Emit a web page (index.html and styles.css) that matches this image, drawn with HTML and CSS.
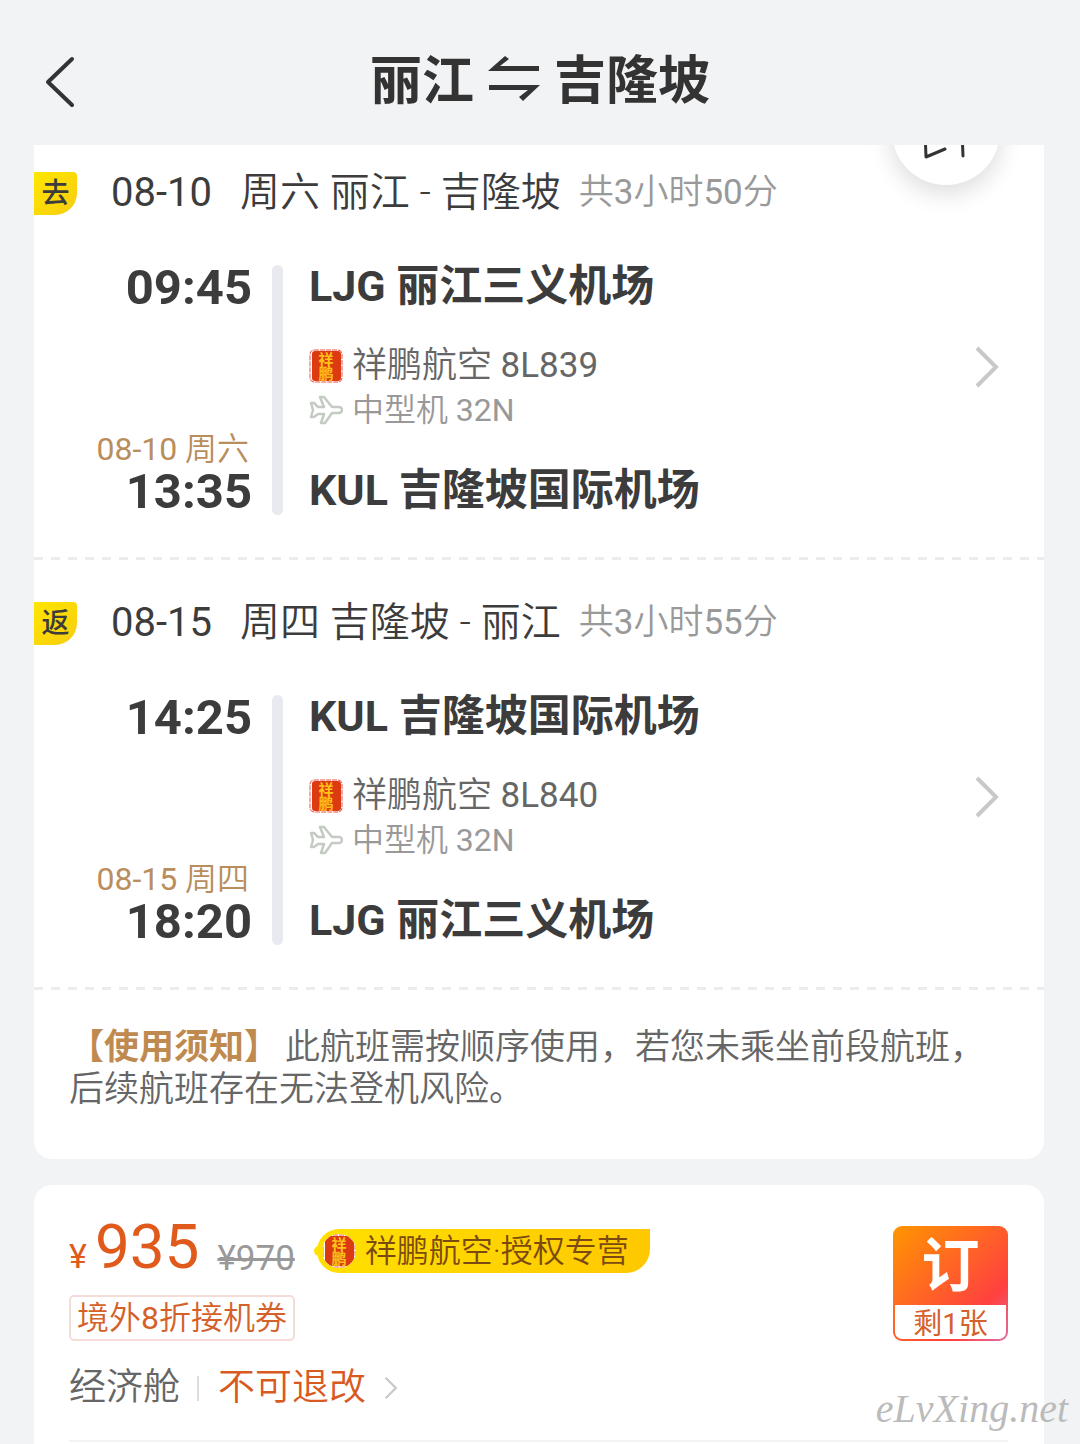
FILE: index.html
```html
<!DOCTYPE html>
<html lang="zh-CN">
<head>
  <meta charset="UTF-8">
  <meta name="viewport" content="width=device-width, initial-scale=1.0">
  <title>丽江 - 吉隆坡</title>
  <link rel="stylesheet" href="styles.css">
</head>
<body>
  <svg class="defs" aria-hidden="true">
    <symbol id="seal" viewBox="0 0 34 34">
      <rect x="1" y="1" width="32" height="32" rx="4" fill="#fff" stroke="#e8524a" stroke-width="1" stroke-dasharray="5 1"/>
      <rect x="3" y="2" width="29" height="30" rx="3" fill="#dc3a10"/>
      <text x="17" y="16" class="seal-text">祥</text>
      <text x="17" y="30" class="seal-text">鹏</text>
    </symbol>
    <symbol id="plane" viewBox="0 0 34 30">
      <path d="M2 8h3l4 4h6L11 2h4l8 10h7a3 3 0 0 1 0 6h-7l-7 10h-4l3-9H9l-4 3H2l2-7z" fill="none" stroke="#c3cbc3" stroke-width="2.5" stroke-linejoin="round"/>
    </symbol>
    <symbol id="chevron" viewBox="0 0 26 44">
      <path d="M3 3l19 19L3 41" fill="none" stroke="currentColor" stroke-width="4"/>
    </symbol>
  </svg>

  <header class="topbar">
    <button class="back" aria-label="返回">
      <svg width="32" height="52" viewBox="0 0 32 52"><path d="M28 3L4 26l24 23" fill="none" stroke="#333" stroke-width="4" stroke-linecap="round" stroke-linejoin="round"/></svg>
    </button>
    <h1>
      <span>丽江</span>
      <svg width="54" height="56" viewBox="0 0 54 56"><path d="M1 17L18 2l4 3-9 7h39v5zM2 31h51L36 47l-4-4 9-7H2z" fill="#333"/></svg>
      <span>吉隆坡</span>
    </h1>
  </header>

  <main>
    <section class="card trip">
      <button class="float-btn" aria-label="分享">
        <svg width="60" height="60" viewBox="0 0 60 60"><path d="M9 30l1 26 19-8M46 30l1 25" fill="none" stroke="#333" stroke-width="3" stroke-linecap="round" stroke-linejoin="round"/></svg>
      </button>

      <article class="segment">
        <h2><span class="tag">去</span><span class="date">08-10</span><span>周六 丽江 - 吉隆坡</span><small>共<span class="num">3</span>小时<span class="num">50</span>分</small></h2>
        <a href="#" class="timeline">
          <div class="times">
            <time>09:45</time>
            <div><span class="arrive-date"><span class="num">08-10</span> 周六</span><time>13:35</time></div>
          </div>
          <span class="bar"></span>
          <div class="info">
            <strong>LJG 丽江三义机场</strong>
            <div>
              <p class="airline"><svg width="34" height="34"><use href="#seal"/></svg><span>祥鹏航空 <span class="num">8L839</span></span></p>
              <p class="model"><svg width="34" height="30"><use href="#plane"/></svg><span>中型机 <span class="num">32N</span></span></p>
            </div>
            <strong>KUL 吉隆坡国际机场</strong>
          </div>
          <svg class="arrow" width="26" height="44"><use href="#chevron"/></svg>
        </a>
      </article>

      <article class="segment">
        <h2><span class="tag">返</span><span class="date">08-15</span><span>周四 吉隆坡 - 丽江</span><small>共<span class="num">3</span>小时<span class="num">55</span>分</small></h2>
        <a href="#" class="timeline">
          <div class="times">
            <time>14:25</time>
            <div><span class="arrive-date"><span class="num">08-15</span> 周四</span><time>18:20</time></div>
          </div>
          <span class="bar"></span>
          <div class="info">
            <strong>KUL 吉隆坡国际机场</strong>
            <div>
              <p class="airline"><svg width="34" height="34"><use href="#seal"/></svg><span>祥鹏航空 <span class="num">8L840</span></span></p>
              <p class="model"><svg width="34" height="30"><use href="#plane"/></svg><span>中型机 <span class="num">32N</span></span></p>
            </div>
            <strong>LJG 丽江三义机场</strong>
          </div>
          <svg class="arrow" width="26" height="44"><use href="#chevron"/></svg>
        </a>
      </article>

      <p class="notice"><b>【使用须知】</b>此航班需按顺序使用，若您未乘坐前段航班，后续航班存在无法登机风险。</p>
    </section>

    <section class="card fare">
      <div class="fare-item">
        <div class="fare-main">
          <div class="price-row">
            <span class="price"><i>¥</i>935</span>
            <del>¥970</del>
            <span class="shop"><svg width="34" height="34"><use href="#seal"/></svg>祥鹏航空·授权专营</span>
          </div>
          <span class="coupon">境外<span class="num">8</span>折接机券</span>
          <div class="rules">
            <span class="cabin">经济舱</span>
            <a href="#">不可退改<svg width="14" height="24"><use href="#chevron"/></svg></a>
          </div>
        </div>
        <button class="book"><b>订</b><span>剩1张</span></button>
      </div>
    </section>
  </main>

  <div class="watermark">eLvXing.net</div>
</body>
</html>
```
FILE: styles.css
```css
* {
  box-sizing: border-box;
}

body {
  margin: 0;
  min-height: 100vh;
  display: flex;
  flex-direction: column;
  position: relative;
  background: #f1f3f5;
  color: #3c3c3c;
  font-family: Roboto, "Noto Sans CJK SC", sans-serif;
  font-weight: 350;
}

h1, h2, p {
  margin: 0;
}

a {
  color: inherit;
  text-decoration: none;
}

button {
  border: none;
  padding: 0;
  font-family: inherit;
  cursor: pointer;
}

svg {
  display: block;
  flex-shrink: 0;
}

.defs {
  display: none;
}

/* digits and codes sit one step heavier than the Chinese text */
.num {
  font-weight: 400;
}

.seal-text {
  font-size: 15px;
  font-weight: 700;
  fill: #ffc21a;
  text-anchor: middle;
}

/* top bar */
.topbar {
  display: grid;
  grid-template-columns: 1fr auto 1fr;
  align-items: center;
  height: 145px;
  padding: 18px 44px 0;
}

.back {
  justify-self: start;
  background: none;
}

.topbar h1 {
  display: flex;
  align-items: center;
  gap: 13px;
  font-size: 52px;
  line-height: 62px;
  color: #333;
}

main {
  flex: 1;
  display: flex;
  flex-direction: column;
  gap: 26px;
  padding: 0 36px 0 34px;
}

.card {
  background: #fff;
  border-radius: 18px;
}

/* trip card */
.trip {
  position: relative;
  overflow: hidden;
  border-top-left-radius: 0;
  border-top-right-radius: 0;
}

.float-btn {
  position: absolute;
  top: -68px;
  right: 44px;
  width: 108px;
  height: 108px;
  display: flex;
  align-items: center;
  justify-content: center;
  border-radius: 50%;
  background: #fff;
  box-shadow: 0 8px 24px rgba(0, 0, 0, 0.14);
}

.segment {
  padding: 35px 0 45px;
  background: repeating-linear-gradient(90deg, #ececec 0 9px, transparent 9px 17px) left bottom / 100% 3px no-repeat;
}

.segment:first-of-type {
  padding-top: 20px;
}

.segment h2 {
  display: flex;
  align-items: center;
  height: 56px;
  margin-bottom: 44px;
  font-size: 40px;
  font-weight: 350;
  line-height: 58px;
}

.tag {
  width: 43px;
  height: 43px;
  margin-right: 34px;
  border-radius: 0 4px 22px 0;
  background: linear-gradient(135deg, #ffe600, #f8cc10);
  font-size: 28px;
  font-weight: 500;
  line-height: 43px;
  text-align: center;
}

.date {
  margin-right: 28px;
  font-weight: 400;
}

.segment small {
  margin-left: 18px;
  font-size: 35px;
  color: #999;
}

.timeline {
  display: flex;
  height: 250px;
}

.times {
  width: 218px;
  display: flex;
  flex-direction: column;
  justify-content: space-between;
  text-align: right;
}

.times time {
  display: block;
  font-size: 49px;
  font-weight: 700;
  line-height: 46px;
}

.arrive-date {
  display: block;
  padding-right: 3px;
  font-size: 32px;
  line-height: 40px;
  color: #b98d5c;
}

.bar {
  width: 11px;
  margin: 0 26px 0 20px;
  border-radius: 6px;
  background: #e9eaef;
}

.info {
  flex: 1;
  display: flex;
  flex-direction: column;
  justify-content: space-between;
  padding-bottom: 4px;
}

.info strong {
  font-size: 43px;
  font-weight: 700;
  line-height: 42px;
}

.airline, .model {
  display: flex;
  align-items: center;
  gap: 9px;
  line-height: 44px;
}

.airline {
  font-size: 35px;
  color: #666;
}

.model {
  font-size: 32px;
  color: #999;
}

.arrow {
  margin: 80px 44px 0 0;
  color: #c8c8c8;
}

.notice {
  padding: 37px 35px 48px;
  font-size: 35px;
  line-height: 42px;
  color: #666;
}

.notice b {
  margin-right: 6px;
  color: #bf8a50;
}

/* fare card */
.fare {
  flex: 1;
  padding: 0 36px 0 35px;
  border-bottom-left-radius: 0;
  border-bottom-right-radius: 0;
}

.fare-item {
  display: flex;
  justify-content: space-between;
  align-items: flex-start;
  padding: 32px 0 27px;
  border-bottom: 2px solid #f3f3f3;
}

.price-row {
  display: flex;
  align-items: center;
  height: 62px;
  margin: 3px 0 13px;
}

.price {
  font-size: 62px;
  font-weight: 400;
  line-height: 62px;
  color: #e05a1c;
}

.price i {
  margin-right: 8px;
  font-size: 34px;
  font-style: normal;
}

.price-row del {
  align-self: flex-end;
  margin: 0 22px 0 18px;
  font-size: 35px;
  font-weight: 400;
  line-height: 46px;
  color: #999;
}

.shop {
  position: relative;
  display: flex;
  align-items: center;
  gap: 9px;
  height: 44px;
  padding: 0 21px 0 5px;
  border-radius: 22px 0 24px 22px;
  background: linear-gradient(90deg, #ffe000, #ffc800);
  font-size: 32px;
  line-height: 40px;
  color: #7a4a12;
}

.shop::before {
  content: "";
  position: absolute;
  left: -3px;
  top: 17px;
  width: 10px;
  height: 10px;
  border-radius: 50%;
  background: #ffe000;
}

.shop svg {
  border-radius: 50%;
  background: #fff;
}

.coupon {
  display: inline-block;
  padding: 0 6px;
  border: 2px solid #f6dcd8;
  border-radius: 5px;
  font-size: 32px;
  line-height: 42px;
  color: #d4612a;
}

.rules {
  display: flex;
  align-items: center;
  margin-top: 22px;
  font-size: 37px;
  line-height: 50px;
}

.cabin {
  display: flex;
  align-items: center;
  color: #666;
}

.cabin::after {
  content: "";
  width: 2px;
  height: 25px;
  margin: 0 19px 0 17px;
  background: #ddd;
}

.rules a {
  display: flex;
  align-items: center;
  color: #d85a1e;
}

.rules svg {
  margin-left: 18px;
  color: #c8c8c8;
}

.book {
  width: 115px;
  height: 115px;
  margin-top: 9px;
  padding: 0 2px 2px;
  border-radius: 9px;
  background: linear-gradient(135deg, #ff9500, #ff4040 75%, #e070a0);
}

.book b {
  display: block;
  height: 79px;
  font-size: 58px;
  line-height: 80px;
  color: #fff;
}

.book span {
  display: block;
  height: 34px;
  border-radius: 0 0 7px 7px;
  background: #fff;
  font-size: 29px;
  line-height: 38px;
  color: #d4612a;
}

.watermark {
  position: absolute;
  right: 12px;
  bottom: 12px;
  font-family: "Liberation Serif", serif;
  font-size: 40px;
  font-style: italic;
  color: #bbb;
}
```
